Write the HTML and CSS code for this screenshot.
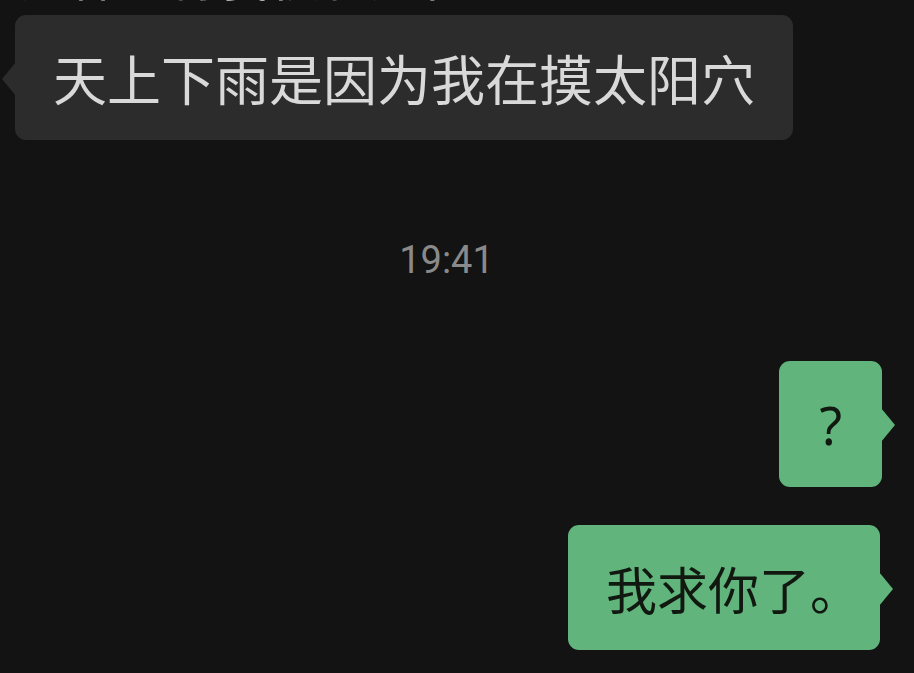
FILE: index.html
```html
<!DOCTYPE html>
<html lang="zh-CN">
<head>
    <meta charset="UTF-8">
    <meta name="viewport" content="width=device-width, initial-scale=1.0">
    <title>聊天</title>
    <link rel="stylesheet" href="styles.css">
</head>
<body>
    <div class="chat">
        <div class="cut-line"><div class="cut-text">这样显得我很有文化</div></div>

        <div class="row left">
            <div class="bubble gray">天上下雨是因为我在摸太阳穴</div>
        </div>

        <div class="time">19:41</div>

        <div class="row right">
            <div class="bubble green q">?</div>
        </div>

        <div class="row right second">
            <div class="bubble green">我求你了。</div>
        </div>
    </div>
</body>
</html>
```

FILE: styles.css
```css
body { margin: 0; background: #131313; font-family: "Noto Sans", "Noto Sans CJK SC", sans-serif; overflow: hidden; }
.chat { padding: 0 32px 0 15px; }
.cut-line { height: 4px; overflow: hidden; padding-left: 5px; }
.cut-text { font-size: 50px; line-height: 50px; height: 50px; margin-top: -48px; color: #d6d6d6; white-space: nowrap; }

.row { display: flex; }
.row.left { margin-top: 11px; }
.row.right { justify-content: flex-end; }
.row.right.second { margin-top: 38px; padding-right: 2px; }

.bubble { position: relative; height: 125px; display: flex; align-items: center; padding: 0 38px; border-radius: 11px; font-size: 54px; box-sizing: border-box; white-space: nowrap; }
.bubble::before { content: ""; position: absolute; top: 47px; width: 14px; height: 34px; }

.bubble.gray { background: #2c2c2c; color: #d9d9d9; }
.bubble.gray::before { left: -13px; background: #2c2c2c; clip-path: polygon(100% 0, 0 50%, 100% 100%); }

.bubble.green { background: #61b47b; color: #101810; font-size: 51px; padding: 0 19px 0 38px; }
.bubble.green::before { right: -13px; background: #61b47b; clip-path: polygon(0 0, 100% 50%, 0 100%); }
.bubble.q { height: 126px; padding: 0 40px; font-size: 52px; }

.time { margin-top: 100px; height: 40px; line-height: 40px; text-align: center; padding-right: 4px; font-size: 38px; color: #8a8a8a; font-family: Roboto, "Noto Sans", sans-serif; }
.time + .row { margin-top: 81px; }
```
